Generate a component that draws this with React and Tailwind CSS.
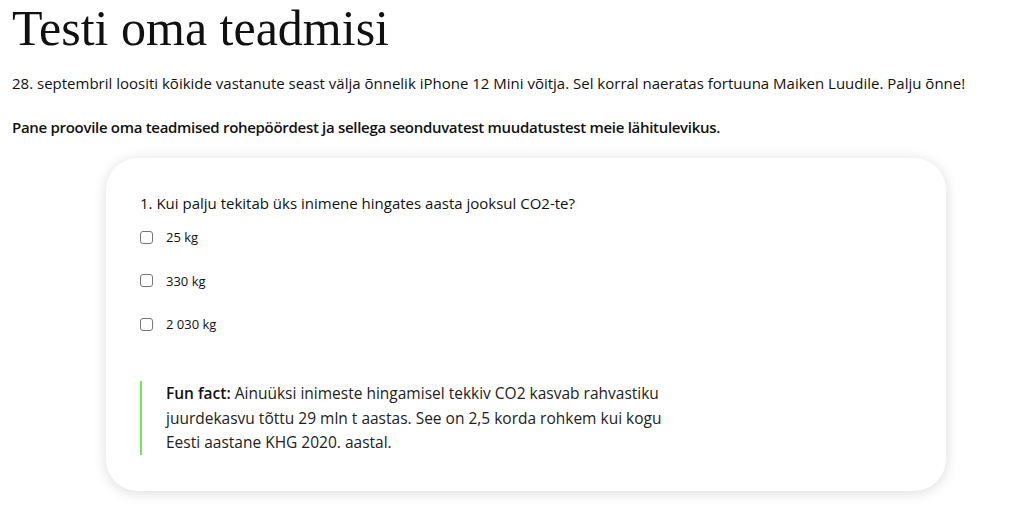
const options = ["25 kg", "330 kg", "2 030 kg"];

const App = () => {
  return (
    <div className="min-h-[511px] bg-white px-3 text-[#111] [font-family:'Open_Sans',sans-serif]">
      <h1 className="pt-[2px] text-[50px] leading-[52px] text-[#111] [font-family:'Liberation_Serif',serif]">
        Testi oma teadmisi
      </h1>
      <p className="mt-[18px] text-[15px] leading-[22px]">
        28. septembril loositi kõikide vastanute seast välja õnnelik iPhone 12 Mini võitja. Sel korral naeratas fortuuna Maiken Luudile. Palju õnne!
      </p>
      <p className="mt-[22px] text-[15px] font-semibold leading-[22px] tracking-[-0.3px]">
        Pane proovile oma teadmised rohepöördest ja sellega seonduvatest muudatustest meie lähitulevikus.
      </p>

      <div className="ml-[94px] mt-[20px] w-[840px] rounded-[32px] bg-white px-[34px] pt-[34px] pb-[36px] shadow-[0_2px_14px_rgba(0,0,0,0.14)]">
        <p className="text-[15px] leading-[22px]">
          1. Kui palju tekitab üks inimene hingates aasta jooksul CO2-te?
        </p>
        <div className="mt-[12px] flex flex-col gap-[21.5px]">
          {options.map((o) => (
            <label key={o} className="flex items-center gap-[13px] text-[13px] leading-[22px]">
              <span className="h-[13px] w-[13px] rounded-[3px] border border-[#767676] bg-white" />
              {o}
            </label>
          ))}
        </div>
        <div className="mt-[46px] border-l-2 border-[#7ee05a] pl-[24px]">
          <p className="max-w-[500px] text-[15.5px] leading-[24.5px] text-[#222]">
            <strong className="font-semibold text-[#111]">Fun fact:</strong> Ainuüksi inimeste hingamisel tekkiv CO2 kasvab rahvastiku juurdekasvu tõttu 29 mln t aastas. See on 2,5 korda rohkem kui kogu Eesti aastane KHG 2020. aastal.
          </p>
        </div>
      </div>
    </div>
  );
};

export default App;
